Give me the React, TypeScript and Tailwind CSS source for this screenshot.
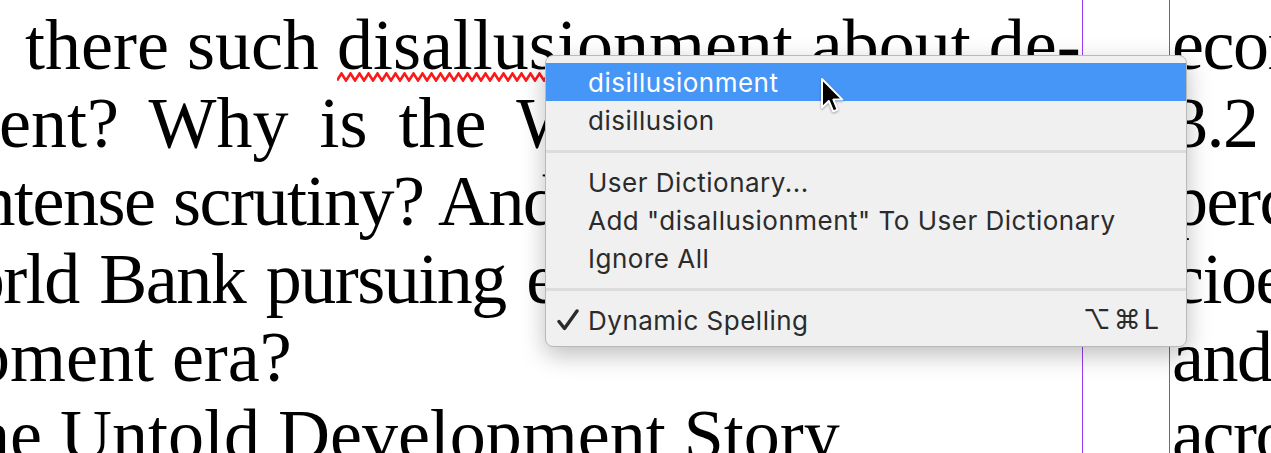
import React from "react";

const serif = "font-['Liberation_Serif','Times_New_Roman',serif]";

function Squiggle() {
  // red zigzag spelling underline
  const teeth = 56;
  let d = "M0 8.5";
  for (let i = 0; i < teeth; i++) {
    d += ` L${i * 9 + 4.5} 1.5 L${i * 9 + 9} 8.5`;
  }
  return (
    <span className="pointer-events-none absolute left-0 right-0 bottom-[3px] h-[10px] overflow-hidden">
      <svg width="500" height="10" viewBox="0 0 500 10" className="block">
        <path d={d} fill="none" stroke="#fb1a1a" strokeWidth="2.6" strokeLinejoin="miter" />
      </svg>
    </span>
  );
}

function Cursor() {
  return (
    <svg width="24" height="38" viewBox="0 0 12 19" className="block drop-shadow-[0_1px_1px_rgba(0,0,0,0.35)]">
      <path
        d="M1 1 L1 15.2 L4.4 12 L6.6 17.2 L8.8 16.3 L6.7 11.3 L11.2 11.3 Z"
        fill="#000"
        stroke="#fff"
        strokeWidth="1"
        strokeLinejoin="round"
      />
    </svg>
  );
}

function Check() {
  return (
    <svg width="22" height="22" viewBox="0 0 22 22" className="block">
      <path d="M2 12.5 L7.5 19.5 L20 2" fill="none" stroke="#2b2b2b" strokeWidth="3.4" strokeLinecap="round" strokeLinejoin="round" />
    </svg>
  );
}

function MenuItem({ children, active }: { children: React.ReactNode; active?: boolean }) {
  return (
    <div
      className={
        "flex h-[38px] items-center pl-[42px] pr-6 " +
        (active ? "bg-[#4696f7] text-white" : "text-[#2b2b2b]")
      }
    >
      {children}
    </div>
  );
}

function Separator() {
  return (
    <div className="flex h-[24px] items-center">
      <div className="h-[3px] w-full bg-[#dcdcdc]" />
    </div>
  );
}

export default function App() {
  return (
    <div className="relative h-[453px] w-[1271px] overflow-hidden bg-white text-black">
      <div className="flex h-full">
        {/* left column */}
        <div className={`w-[1082px] shrink-0 overflow-hidden pt-[6px] text-[72px] leading-[78px] ${serif}`}>
          <div className="-ml-[53px] whitespace-nowrap [word-spacing:0px]">
            <span className="mr-2">Is</span> there such{" "}
            <span className="relative">
              disallusionment
              <Squiggle />
            </span>{" "}
            about de-
          </div>
          <div className="-ml-[285px] whitespace-nowrap [word-spacing:13px]">
            development? Why is the World Bank under such
          </div>
          <div className="-ml-[39px] whitespace-nowrap tracking-[-1.5px] [word-spacing:2px]">intense scrutiny? And the</div>
          <div className="-ml-[92px] whitespace-nowrap tracking-[-1.5px] [word-spacing:4px]">World Bank pursuing economic</div>
          <div className="-ml-[218px] whitespace-nowrap">development era?</div>
          <div className="-ml-[70px] whitespace-nowrap">The Untold Development Story</div>
        </div>

        {/* column guides */}
        <div className="w-px shrink-0 bg-[#9b3cf4]" />
        <div className="w-[86px] shrink-0" />
        <div className="w-px shrink-0 bg-[#9b3cf4]" />

        {/* right column */}
        <div className={`flex-1 overflow-hidden pl-[2px] pt-[6px] text-[72px] leading-[78px] tracking-[-1.5px] ${serif}`}>
          <div className="whitespace-nowrap">economic</div>
          <div className="whitespace-nowrap">3.2 billion</div>
          <div className="whitespace-nowrap">percent</div>
          <div className="whitespace-nowrap">cioeconomic</div>
          <div className="whitespace-nowrap">and the</div>
          <div className="whitespace-nowrap">across</div>
        </div>
      </div>

      {/* spelling context menu */}
      <div className="absolute left-[545px] top-[55px] w-[642px] rounded-[8px] border border-[#b9b9b9] bg-[#f0f0f0] py-[7px] font-['Inter','Liberation_Sans',sans-serif] text-[26px] tracking-[0.5px] shadow-[0_8px_24px_rgba(0,0,0,0.26)]">
        <MenuItem active>disillusionment</MenuItem>
        <MenuItem>disillusion</MenuItem>
        <Separator />
        <MenuItem>User Dictionary...</MenuItem>
        <MenuItem>Add "disallusionment" To User Dictionary</MenuItem>
        <MenuItem>Ignore All</MenuItem>
        <Separator />
        <div className="relative flex h-[38px] items-center pl-[42px] pr-[24px] text-[#2b2b2b]">
          <span className="absolute left-[11px] top-[8px]">
            <Check />
          </span>
          <span className="flex-1">Dynamic Spelling</span>
          <span className="font-['Inter','DejaVu_Sans',sans-serif] text-[27px] tracking-[3px]">⌥⌘L</span>
        </div>
      </div>

      {/* mouse pointer */}
      <div className="absolute left-[820px] top-[77px]">
        <Cursor />
      </div>
    </div>
  );
}
